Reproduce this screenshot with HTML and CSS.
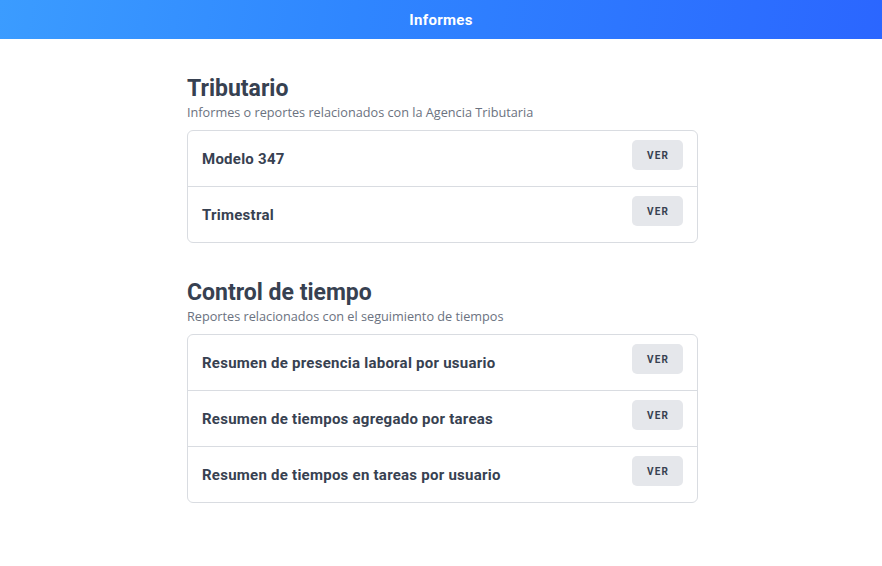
FILE: index.html
```html
<!DOCTYPE html>
<html lang="es">
<head>
<meta charset="utf-8">
<title>Informes</title>
<link rel="stylesheet" href="styles.css">
</head>
<body>
<header class="topbar"><h1 class="topbar-title">Informes</h1></header>
<main class="content">
  <section class="section">
    <h2 class="section-title">Tributario</h2>
    <p class="section-sub">Informes o reportes relacionados con la Agencia Tributaria</p>
    <ul class="card">
      <li class="row"><span class="row-name">Modelo 347</span><button class="btn">VER</button></li>
      <li class="row"><span class="row-name">Trimestral</span><button class="btn">VER</button></li>
    </ul>
  </section>
  <section class="section">
    <h2 class="section-title">Control de tiempo</h2>
    <p class="section-sub">Reportes relacionados con el seguimiento de tiempos</p>
    <ul class="card">
      <li class="row"><span class="row-name">Resumen de presencia laboral por usuario</span><button class="btn">VER</button></li>
      <li class="row"><span class="row-name">Resumen de tiempos agregado por tareas</span><button class="btn">VER</button></li>
      <li class="row"><span class="row-name">Resumen de tiempos en tareas por usuario</span><button class="btn">VER</button></li>
    </ul>
  </section>
</main>
</body>
</html>
```
FILE: styles.css
```css
* { box-sizing: border-box; }
html, body { margin: 0; padding: 0; background: #fff; }
body { font-family: "Open Sans", "Noto Sans", sans-serif; color: #374151; }
.topbar {
  height: 39px;
  display: flex;
  align-items: center;
  justify-content: center;
  background: linear-gradient(100deg, #3b9cff 0%, #2f86ff 40%, #2b66ff 100%);
}
.topbar-title {
  margin: 0;
  font-family: Roboto, sans-serif;
  font-weight: 700;
  font-size: 15px;
  color: #fff;
  letter-spacing: 0.3px;
}
.content {
  width: 514px;
  margin: 0 auto;
  padding: 36px 0 0 3px;
  display: flex;
  flex-direction: column;
  gap: 36px;
}
.section-title {
  margin: 0;
  font-family: Roboto, sans-serif;
  font-weight: 700;
  font-size: 23px;
  line-height: 28px;
  color: #374151;
}
.section-sub {
  margin: 0 0 9px;
  font-size: 12.7px;
  line-height: 18px;
  color: #6b7280;
}
.card {
  list-style: none;
  margin: 0;
  padding: 0;
  border: 1px solid #d9dce1;
  border-radius: 6px;
}
.row {
  height: 56px;
  display: flex;
  align-items: center;
  justify-content: space-between;
  padding: 0 14px;
  border-top: 1px solid #d9dce1;
}
.row:first-child { border-top: 0; height: 55px; }
.row-name {
  font-family: Roboto, sans-serif;
  font-weight: 700;
  font-size: 15px;
  letter-spacing: 0.25px;
  color: #374151;
}
.btn {
  align-self: flex-start;
  margin-top: 9px;
  width: 51px;
  height: 30px;
  border: 0;
  border-radius: 5px;
  background: #e5e7eb;
  font-family: Roboto, sans-serif;
  font-weight: 700;
  font-size: 10px;
  letter-spacing: 1.2px;
  color: #374151;
  padding: 0 0 0 1px;
}
```
